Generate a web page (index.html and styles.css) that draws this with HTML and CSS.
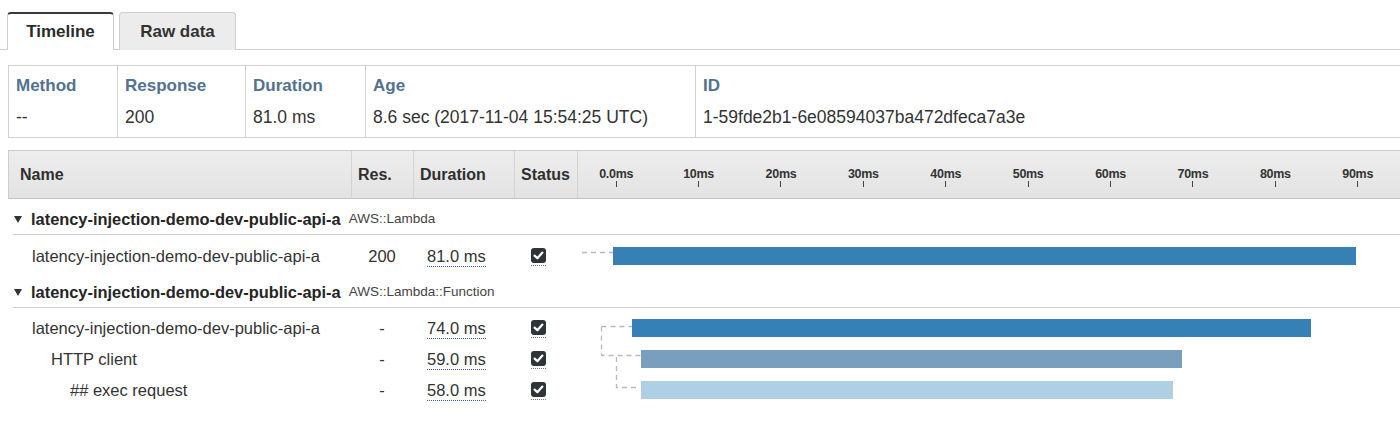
FILE: index.html
```html
<!DOCTYPE html>
<html>
<head>
<meta charset="utf-8">
<title>Trace timeline</title>
<link rel="stylesheet" href="styles.css">
</head>
<body>
<div class="tabs">
  <div class="tab tab-active">Timeline</div>
  <div class="tab">Raw data</div>
</div>
<div class="page">
  <div class="summary">
    <div class="sum-col"><div class="sum-h">Method</div><div class="sum-v">--</div></div>
    <div class="sum-col"><div class="sum-h">Response</div><div class="sum-v">200</div></div>
    <div class="sum-col"><div class="sum-h">Duration</div><div class="sum-v">81.0 ms</div></div>
    <div class="sum-col"><div class="sum-h">Age</div><div class="sum-v">8.6 sec (2017-11-04 15:54:25 UTC)</div></div>
    <div class="sum-col"><div class="sum-h">ID</div><div class="sum-v">1-59fde2b1-6e08594037ba472dfeca7a3e</div></div>
  </div>

  <div class="trace">
    <div class="thead">
      <div class="th th-name">Name</div>
      <div class="th">Res.</div>
      <div class="th">Duration</div>
      <div class="th">Status</div>
      <div class="th th-axis">
        <div class="ticks">
          <div class="tick"><span class="tick-label">0.0ms</span><span class="tick-mark"></span></div>
          <div class="tick"><span class="tick-label">10ms</span><span class="tick-mark"></span></div>
          <div class="tick"><span class="tick-label">20ms</span><span class="tick-mark"></span></div>
          <div class="tick"><span class="tick-label">30ms</span><span class="tick-mark"></span></div>
          <div class="tick"><span class="tick-label">40ms</span><span class="tick-mark"></span></div>
          <div class="tick"><span class="tick-label">50ms</span><span class="tick-mark"></span></div>
          <div class="tick"><span class="tick-label">60ms</span><span class="tick-mark"></span></div>
          <div class="tick"><span class="tick-label">70ms</span><span class="tick-mark"></span></div>
          <div class="tick"><span class="tick-label">80ms</span><span class="tick-mark"></span></div>
          <div class="tick"><span class="tick-label">90ms</span><span class="tick-mark"></span></div>
        </div>
      </div>
    </div>

    <div class="group-row">
      <span class="caret"></span>
      <span class="group-name">latency-injection-demo-dev-public-api-a</span>
      <span class="group-type">AWS::Lambda</span>
    </div>
    <div class="group-body group-body-first">
      <svg class="links" width="100%" height="100%">
        <path d="M574 17.5 H605" />
      </svg>
      <div class="trow">
        <div class="td td-name lvl1">latency-injection-demo-dev-public-api-a</div>
        <div class="td td-res">200</div>
        <div class="td td-dur"><span class="dur">81.0 ms</span></div>
        <div class="td td-status"><span class="check"><svg width="15" height="15" viewBox="0 0 15 15"><rect x="0" y="0" width="15" height="15" rx="3" fill="#2e3438"/><path d="M3.6 7.6 L6.4 10.3 L11.4 4.6" fill="none" stroke="#fff" stroke-width="2.2" stroke-linecap="round" stroke-linejoin="round"/></svg></span></div>
        <div class="td td-bar"><div class="bar bar-main" style="margin-left:36px;width:743px"></div></div>
      </div>
    </div>

    <div class="group-row">
      <span class="caret"></span>
      <span class="group-name">latency-injection-demo-dev-public-api-a</span>
      <span class="group-type">AWS::Lambda::Function</span>
    </div>
    <div class="group-body">
      <svg class="links" width="100%" height="100%">
        <path d="M593.5 18.5 H624 M593.5 18.5 V47.5 H633 M608.5 49 V79.5 H628" />
      </svg>
      <div class="trow">
        <div class="td td-name lvl1">latency-injection-demo-dev-public-api-a</div>
        <div class="td td-res">-</div>
        <div class="td td-dur"><span class="dur">74.0 ms</span></div>
        <div class="td td-status"><span class="check"><svg width="15" height="15" viewBox="0 0 15 15"><rect x="0" y="0" width="15" height="15" rx="3" fill="#2e3438"/><path d="M3.6 7.6 L6.4 10.3 L11.4 4.6" fill="none" stroke="#fff" stroke-width="2.2" stroke-linecap="round" stroke-linejoin="round"/></svg></span></div>
        <div class="td td-bar"><div class="bar bar-main" style="margin-left:55px;width:679px"></div></div>
      </div>
      <div class="trow">
        <div class="td td-name lvl2">HTTP client</div>
        <div class="td td-res">-</div>
        <div class="td td-dur"><span class="dur">59.0 ms</span></div>
        <div class="td td-status"><span class="check"><svg width="15" height="15" viewBox="0 0 15 15"><rect x="0" y="0" width="15" height="15" rx="3" fill="#2e3438"/><path d="M3.6 7.6 L6.4 10.3 L11.4 4.6" fill="none" stroke="#fff" stroke-width="2.2" stroke-linecap="round" stroke-linejoin="round"/></svg></span></div>
        <div class="td td-bar"><div class="bar bar-remote" style="margin-left:64px;width:541px"></div></div>
      </div>
      <div class="trow">
        <div class="td td-name lvl3">## exec request</div>
        <div class="td td-res">-</div>
        <div class="td td-dur"><span class="dur">58.0 ms</span></div>
        <div class="td td-status"><span class="check"><svg width="15" height="15" viewBox="0 0 15 15"><rect x="0" y="0" width="15" height="15" rx="3" fill="#2e3438"/><path d="M3.6 7.6 L6.4 10.3 L11.4 4.6" fill="none" stroke="#fff" stroke-width="2.2" stroke-linecap="round" stroke-linejoin="round"/></svg></span></div>
        <div class="td td-bar"><div class="bar bar-sub" style="margin-left:64px;width:532px"></div></div>
      </div>
    </div>
  </div>
</div>
</body>
</html>
```

FILE: styles.css
```css
* { box-sizing: border-box; }

html, body {
  margin: 0;
  padding: 0;
  background: #fff;
}

body {
  font-family: "Liberation Sans", Arial, Helvetica, sans-serif;
  color: #333;
  overflow: hidden;
}

/* ---------- tabs ---------- */
.tabs {
  display: flex;
  gap: 5px;
  padding: 12px 0 0 7px;
  border-bottom: 1px solid #cfcfcf;
  height: 50px;
}

.tab {
  width: 117px;
  height: 38px;
  display: flex;
  align-items: center;
  justify-content: center;
  font-size: 17px;
  font-weight: bold;
  color: #333;
  background: #ececec;
  border: 1px solid #cfcfcf;
  border-bottom: none;
  border-radius: 4px 4px 0 0;
}

.tab-active {
  width: 107px;
  background: #fff;
  border-top: 2px solid #3a3a3a;
  height: 38px;
  margin-bottom: -1px;
  color: #2b2b2b;
}

/* ---------- page ---------- */
.page {
  padding-left: 8px;
}

/* ---------- summary ---------- */
.summary {
  margin-top: 15px;
  display: grid;
  grid-template-columns: 109px 128px 120px 330px 1fr;
  border-top: 1px solid #d2d2d2;
  border-bottom: 1px solid #d2d2d2;
}

.sum-col {
  border-left: 1px solid #d2d2d2;
  padding: 10px 0 10px 7px;
}

.sum-h {
  font-size: 17px;
  line-height: 20px;
  font-weight: bold;
  color: #52728f;
}

.sum-v {
  margin-top: 11px;
  font-size: 17.5px;
  line-height: 20px;
  color: #333;
  white-space: nowrap;
}

/* ---------- trace table ---------- */
.trace {
  margin-top: 12px;
}

.thead {
  display: grid;
  grid-template-columns: 342px 62px 101px 63px 1fr;
  height: 49px;
  background: linear-gradient(#ededed, #e3e3e3);
  border-top: 1px solid #cdcdcd;
  border-bottom: 1px solid #c4c4c4;
  border-left: 1px solid #cdcdcd;
}

.th {
  display: flex;
  align-items: center;
  padding-left: 6px;
  font-size: 16px;
  font-weight: bold;
  color: #2f2f2f;
  border-left: 1px solid #d3d3d3;
}

.th-name {
  border-left: none;
  padding-left: 11px;
}

.th-axis {
  align-items: flex-start;
  padding: 16px 0 0 0;
  overflow: hidden;
}

.ticks {
  display: flex;
  margin-left: -3px;
}

.tick {
  flex: 0 0 82.4px;
  display: flex;
  flex-direction: column;
  align-items: center;
}

.tick-label {
  font-size: 12.5px;
  line-height: 14px;
  font-weight: bold;
  color: #333;
  letter-spacing: -0.3px;
}

.tick-mark {
  width: 1px;
  height: 6px;
  background: #444;
}

/* ---------- group rows ---------- */
.group-row {
  display: flex;
  align-items: center;
  height: 36px;
  margin-left: 5px;
  padding: 10px 0 5px 1px;
  border-bottom: 1px solid #d0d0d0;
  line-height: 20px;
}

.caret {
  width: 0;
  height: 0;
  border-left: 4.5px solid transparent;
  border-right: 4.5px solid transparent;
  border-top: 7px solid #333;
  margin-right: 9px;
}

.group-name {
  font-size: 16.4px;
  font-weight: bold;
  color: #252525;
}

.group-type {
  margin-left: 8px;
  font-size: 13.5px;
  color: #444;
}

.group-body {
  position: relative;
  padding: 4px 0 0;
}

.group-body-first {
  padding: 5px 0 1px;
}

.links {
  position: absolute;
  top: 0;
  left: 0;
  pointer-events: none;
  overflow: visible;
}

.links path {
  fill: none;
  stroke: #b9b9b9;
  stroke-width: 1.3;
  stroke-dasharray: 5 4;
}

/* ---------- data rows ---------- */
.trow {
  display: grid;
  grid-template-columns: 343px 62px 101px 63px 1fr;
  height: 31px;
  align-items: center;
}

.td {
  font-size: 16.5px;
  line-height: 20px;
  color: #333;
  white-space: nowrap;
}

.lvl1 { padding-left: 24px; }
.lvl2 { padding-left: 43px; }
.lvl3 { padding-left: 62px; }

.td-res {
  text-align: center;
}

.td-dur {
  padding-left: 14px;
}

.dur {
  border-bottom: 1px dotted #3a6596;
  padding-bottom: 1px;
}

.td-status {
  padding-left: 17px;
  display: flex;
  padding-top: 3px;
}

.check {
  display: flex;
  padding-bottom: 2px;
  border-bottom: 1px dotted #777;
}

.td-bar {
  display: flex;
  align-items: center;
  height: 31px;
}

.bar {
  height: 18px;
  flex: none;
}

.bar-main { background: #3580b4; }
.bar-remote { background: #7a9ebd; }
.bar-sub { background: #afcfe4; }
```
